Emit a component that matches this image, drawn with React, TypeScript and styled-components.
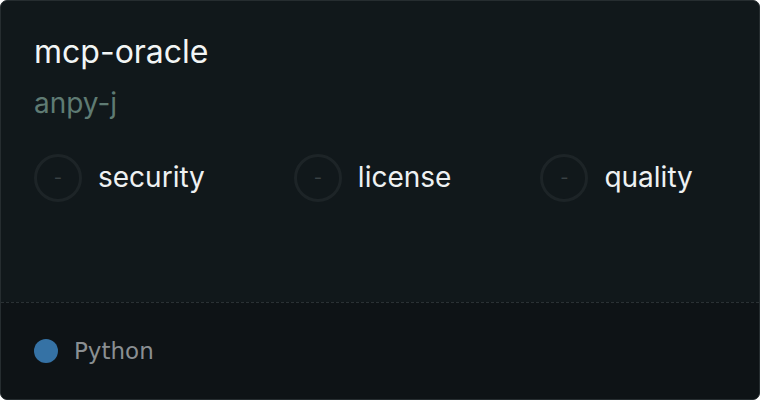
import React from 'react';
import styled, { createGlobalStyle } from 'styled-components';

const GlobalStyle = createGlobalStyle`
  html, body {
    margin: 0;
    padding: 0;
    background: #ffffff;
  }
  body {
    font-family: Inter, "Liberation Sans", sans-serif;
  }
`;

type Check = {
    label: string;
    score: string;
};

const checks: Check[] = [
    { label: 'security', score: '-' },
    { label: 'license', score: '-' },
    { label: 'quality', score: '-' },
];

const App = () => {
    return (
        <>
            <GlobalStyle />
            <Card>
                <Body>
                    <Title>mcp-oracle</Title>
                    <Owner>anpy-j</Owner>
                    <CheckRow>
                        {checks.map((c) => (
                            <CheckItem key={c.label}>
                                <ScoreRing>{c.score}</ScoreRing>
                                <CheckLabel>{c.label}</CheckLabel>
                            </CheckItem>
                        ))}
                    </CheckRow>
                </Body>
                <Footer>
                    <LangDot color="#3572A5" />
                    <LangName>Python</LangName>
                </Footer>
            </Card>
        </>
    );
};

const Card = styled.div`
  box-sizing: border-box;
  width: 760px;
  height: 400px;
  display: flex;
  flex-direction: column;
  background-color: #11181b;
  border: 1px solid #262d30;
  border-radius: 7px;
  overflow: hidden;
`;

const Body = styled.div`
  height: 301px;
  box-sizing: border-box;
  padding: 31px 33px 0;
  display: flex;
  flex-direction: column;
`;

const Title = styled.h1`
  margin: 0;
  font-size: 32px;
  font-weight: 400;
  line-height: normal;
  color: #f2f5f5;
`;

const Owner = styled.div`
  margin-top: 15px;
  font-size: 28px;
  line-height: normal;
  color: #5f7b73;
`;

const CheckRow = styled.div`
  margin-top: 34px;
  display: flex;
  align-items: center;
  gap: 89px;
`;

const CheckItem = styled.div`
  display: flex;
  align-items: center;
  gap: 16px;
`;

const ScoreRing = styled.div`
  box-sizing: border-box;
  width: 48px;
  height: 48px;
  border-radius: 50%;
  border: 3px solid #1d2427;
  display: flex;
  align-items: center;
  justify-content: center;
  font-size: 18px;
  line-height: 1;
  color: #3a4245;
`;

const CheckLabel = styled.span`
  font-size: 28px;
  line-height: 1;
  margin-bottom: 2px;
  color: #eef1f2;
`;

const Footer = styled.div`
  flex: 1;
  display: flex;
  align-items: center;
  gap: 16px;
  padding: 0 33px;
  background-color: #0e1316;
  border-top: 1px dashed #2a3134;
`;

const LangDot = styled.span<{ color: string }>`
  width: 24px;
  height: 24px;
  border-radius: 50%;
  background-color: ${(p) => p.color};
`;

const LangName = styled.span`
  font-family: "DejaVu Sans", sans-serif;
  font-size: 23px;
  color: #8a8f92;
`;

export default App;
